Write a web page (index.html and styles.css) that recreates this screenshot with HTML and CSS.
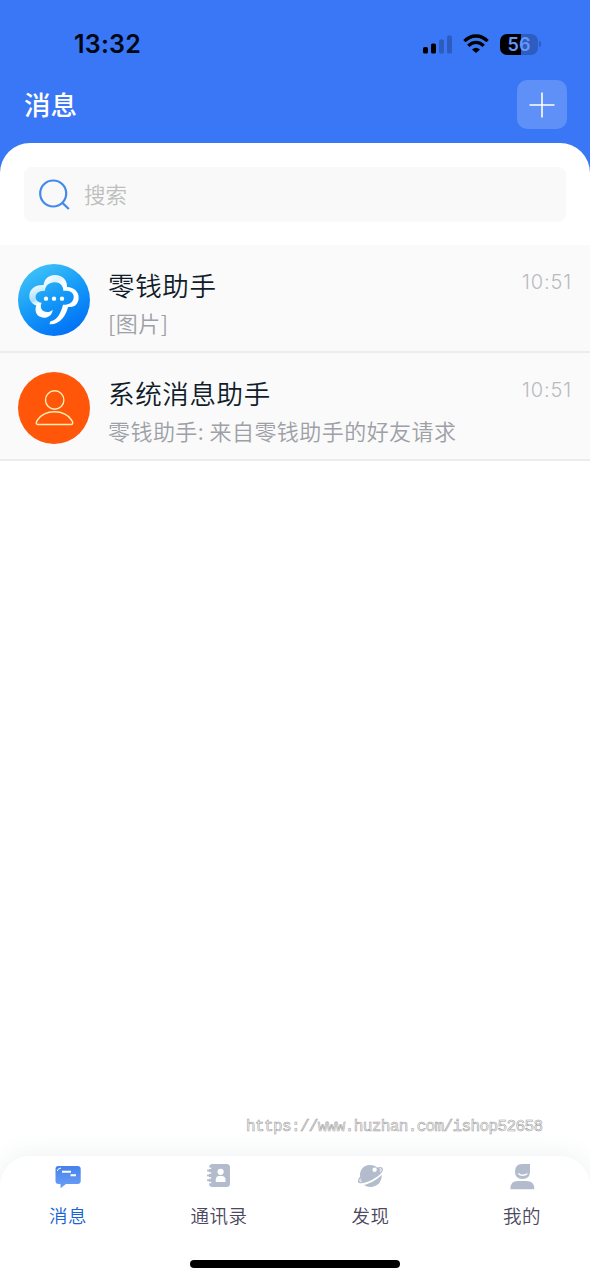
FILE: index.html
```html
<!DOCTYPE html>
<html lang="zh-CN">
<head>
<meta charset="utf-8">
<title>消息</title>
<link rel="stylesheet" href="styles.css">
</head>
<body>
<div class="app">
  <header class="header">
    <div class="status">
      <span class="clock">13:32</span>
      <div class="indicators">
        <svg class="signal" width="30" height="20" viewBox="0 0 30 20">
          <rect x="0" y="13" width="5" height="6.500" rx="1.6"/>
          <rect x="8" y="9.5" width="5" height="10" rx="1.6"/>
          <g opacity=".22"><rect x="16" y="5.500" width="5" height="14" rx="1.6"/><rect x="24" y="1.500" width="5" height="18" rx="1.6"/></g>
        </svg>
        <svg class="wifi" width="26" height="19" viewBox="0 0 26 19">
          <g fill="none" stroke="#000" stroke-width="3.3"><path d="M1.4 7.2Q6.300 2 13 2T24.600 7.200"/><path d="M5.300 11.800Q8.700 8.300 13 8.300T20.700 11.800"/></g>
          <path d="M9 15.500Q13 12 17 15.500L13 19Z"/>
        </svg>
        <div class="battery"><span>56</span></div>
        <i class="battery-cap"></i>
      </div>
    </div>
    <div class="titlebar">
      <h1>消息</h1>
      <button class="add" aria-label="添加"><svg width="26" height="26" viewBox="0 0 26 26"><path d="M13 .5v25M.5 13h25" stroke="#fff" stroke-width="1.6"/></svg></button>
    </div>
  </header>

  <main class="sheet">
    <div class="search">
      <svg width="32" height="32" viewBox="0 0 32 32"><g fill="none" stroke="#4389ee" stroke-width="2.200"><circle cx="15.200" cy="14.500" r="13"/><path d="M24.400 23.900l6.400 6.100"/></g></svg>
      <span>搜索</span>
    </div>
    <div class="row">
      <svg class="avatar" viewBox="24 24 216 216">
        <defs>
          <linearGradient id="sky" x1=".2" y1="0" x2=".75" y2="1"><stop stop-color="#41c5f8"/><stop offset=".5" stop-color="#1499f8"/><stop offset="1" stop-color="#006df6"/></linearGradient>
          <linearGradient id="cloudL" x1="0" y1="0" x2=".3" y2="1"><stop stop-color="#fff"/><stop offset=".48" stop-color="#a9e0fc"/><stop offset=".65" stop-color="#fff"/></linearGradient>
          <linearGradient id="cloudR" x1="0" y1="0" x2=".7" y2="1"><stop stop-color="#fff"/><stop offset=".25" stop-color="#dcf3ff"/><stop offset=".4" stop-color="#fff"/></linearGradient>
        </defs>
        <circle cx="132" cy="132" r="108" fill="url(#sky)"/>
        <path fill="url(#cloudL)" d="M104 88C79 84 59 98 58 119C57 132 66 145 79 148C71 168 83 187 105 185C119 183 127 174 128 161C119 171 100 170 94 158C91 151 93 143 95 140C82 140 76 130 77 121C79 108 91 104 104 105Z"/>
        <path fill="url(#cloudR)" d="M101 96C98 73 114 57 135 57C158 57 172 73 171 93C192 94 207 108 206 126C205 147 190 155 174 153C169 178 149 207 119 205C119 202 119 199 122 196C143 191 153 170 159 146C176 147 189 139 191 125C193 113 183 104 169 104H160C160 88 148 78 133 79C117 80 107 88 104 105Z"/>
        <g fill="#fff"><circle cx="108" cy="128" r="6.500"/><circle cx="132" cy="128" r="6.500"/><circle cx="156" cy="128" r="6.500"/></g>
      </svg>
      <div class="body"><div class="name">零钱助手</div><div class="preview">[图片]</div></div>
      <time>10:51</time>
    </div>
    <div class="row">
      <svg class="avatar" viewBox="0 0 72 72">
        <circle cx="36" cy="36" r="36" fill="#ff560a"/>
        <g fill="none" stroke="#ffedb5" stroke-width="1.400"><circle cx="36.700" cy="28" r="9.200"/><path d="M20 52.500C17.500 52.500 18.200 50 19.500 48C27 37 46 37 53.500 48C55 50 55.500 52.500 53 52.500Z"/></g>
      </svg>
      <div class="body"><div class="name">系统消息助手</div><div class="preview">零钱助手: 来自零钱助手的好友请求</div></div>
      <time>10:51</time>
    </div>
  </main>

  <div class="watermark"><svg width="304" height="24" viewBox="0 0 304 24"><text x="3" y="17" textLength="297" lengthAdjust="spacing">https://www.huzhan.com/ishop52658</text></svg></div>

  <nav class="tabs">
    <div class="tab active">
      <svg width="28" height="28" viewBox="0 0 28 28"><defs><linearGradient id="chat" x1="0" y1="0" x2="0" y2="1"><stop stop-color="#4581ed"/><stop offset="1" stop-color="#6da0f5"/></linearGradient></defs><path fill="url(#chat)" d="M4.500 4H23.500Q26.700 4 26.700 7V19Q26.700 22 23.500 22H12L6.500 26.200V22H4.500Q1.500 22 1.500 19V7Q1.500 4 4.500 4Z"/><path d="M8 9.700H17M16.500 13.200H22" stroke="#fff" stroke-width="2"/><path d="M3.300 9Q3.500 6.500 7 6" stroke="#fff" fill="none"/></svg>
      <span>消息</span>
    </div>
    <div class="tab">
      <svg width="28" height="28" viewBox="0 0 28 28"><rect x="4" y="2" width="21" height="23" rx="3.500" fill="#b3bccd"/><path d="M4 6.200H6.200M4 10.900H6.200M4 16H6.200M4 20.600H6.200" stroke="#fff" stroke-width="1.500"/><path d="M2.900 8.500H6M2.900 13.400H6M2.900 18.300H6" stroke="#b3bccd" stroke-width="2" stroke-linecap="round"/><g fill="#fff"><circle cx="15.600" cy="9.800" r="3.100"/><path d="M10.800 20V17.500Q11 14 14 14H17Q20.300 14 20.500 17.500V20Z"/></g></svg>
      <span>通讯录</span>
    </div>
    <div class="tab">
      <svg width="28" height="28" viewBox="0 0 28 28"><g fill="#b3bccd"><path d="M3.100 14.500C2.200 8.500 6.500 3 12.600 3C15.600 3 18 3.800 20 5.400C23 4.500 26 4.600 26 7.500C26 11 19 16 13 18.800C8 21.200 2 22.500 1 19.700C.500 18 1.700 16 3.100 14.500Z"/><path d="M7 23C15 21 21 16.500 24.700 13C25 20 20 25 13.500 25Q9.500 25 7 23Z"/></g><circle cx="17.600" cy="7.800" r="2.200" fill="#fff"/><g fill="none" stroke="#fff" stroke-width="1" stroke-linecap="round"><path d="M23 6.700Q24.700 6.300 24.200 8.200Q23.900 9 23.300 9.600M3.300 17Q2 18.700 3 19.200Q3.600 19.500 4.500 19.200"/></g></svg>
      <span>发现</span>
    </div>
    <div class="tab">
      <svg width="28" height="28" viewBox="0 0 28 28"><g fill="#b3bccd"><path d="M14 2H22V9.500Q22 17 14.500 17T7 9.500Q7 2 14 2Z"/><path d="M2.500 27.200Q2 19 10 19H18.500Q26.500 19 26.300 27.200Z"/></g><path d="M10.800 11.800C12 13.700 17.500 13.700 18.800 11.800" fill="none" stroke="#fff" stroke-width="1.400" stroke-linecap="round"/></svg>
      <span>我的</span>
    </div>
    <div class="home"></div>
  </nav>
</div>
</body>
</html>
```

FILE: styles.css
```css
* { box-sizing: border-box; }
body { margin: 0; font-family: Inter, "Noto Sans CJK SC", sans-serif; background: #fff; }
.app { width: 590px; height: 1280px; display: flex; flex-direction: column; background: #fff; overflow: hidden; }
.header { height: 173px; flex: none; background: #3977f6; }
.status { height: 80px; padding: 8px 49px 0 74px; display: flex; align-items: center; justify-content: space-between; }
.clock { font-size: 25px; line-height: 30px; letter-spacing: .2px; font-weight: 600; color: #000713; }
.indicators { display: flex; align-items: center; }
.wifi { margin: 0 0 1px 10px; }
.battery { width: 38px; height: 21px; margin-left: 11px; border-radius: 7px; background: linear-gradient(90deg, #000 55%, #2d5dc0 55%); color: #6797f8; font-size: 18px; font-weight: 600; line-height: 21px; text-align: center; }
.battery-cap { width: 2px; height: 6px; margin-left: 1px; border-radius: 0 2px 2px 0; background: #2d5dc0; }
.titlebar { height: 49px; padding: 0 23px 0 24px; display: flex; align-items: center; justify-content: space-between; }
.titlebar h1 { margin: 0; font-size: 26.5px; line-height: 38px; font-weight: 500; color: #fff; }
.add { width: 50px; height: 49px; padding: 0; border: 0; border-radius: 10px; background: #5e90f8; display: flex; align-items: center; justify-content: center; }
.sheet { margin-top: -30px; padding-top: 24px; border-radius: 30px 30px 0 0; background: #fff; }
.search { height: 55px; margin: 0 24px 23px; padding-left: 14px; display: flex; align-items: center; gap: 14px; border-radius: 8px; background: #f9f9f9; color: #bebebe; font-size: 21.5px; font-weight: 350; }
.search span { margin-top: -3px; }
.row { height: 108px; padding: 4px 18px 0; display: flex; align-items: center; border-bottom: 2px solid #ececee; background: #fafafa; }
.avatar { width: 72px; height: 72px; flex: none; }
.body { flex: 1; padding: 7px 0 0 18px; }
.name { font-size: 26.5px; line-height: 38px; letter-spacing: .65px; color: #101c2a; font-weight: 350; }
.preview { margin-top: -2px; font-family: "Noto Sans CJK SC", sans-serif; font-size: 22px; line-height: 38px; letter-spacing: .45px; color: #9da0a6; font-weight: 350; }
.row time { align-self: flex-start; margin-top: 21px; font-size: 20px; line-height: 24px; letter-spacing: .9px; font-weight: 300; color: #b9bbbf; }
.watermark { margin-top: auto; height: 42px; padding-left: 243px; }
.watermark svg { display: block; }
.watermark text { font-family: "Liberation Mono", monospace; font-size: 16px; fill: #fff; stroke: #a0a0a0; stroke-width: .6px; }
.tabs { height: 124px; flex: none; padding: 6px 0 0; display: grid; grid-template-columns: 136px 166px 137px 166px; grid-template-rows: 98px 8px; border-radius: 30px 30px 0 0; background: #fff; box-shadow: 0 -4px 22px rgba(60,80,100,.07); }
.tab { display: flex; flex-direction: column; align-items: center; color: #4b4860; font-size: 18.5px; line-height: 26px; letter-spacing: .5px; gap: 13px; font-weight: 350; }
.tab.active { color: #1763d8; }
.home { grid-column: 1 / -1; width: 210px; height: 8px; margin-left: 190px; border-radius: 4px; background: #000; }
```
